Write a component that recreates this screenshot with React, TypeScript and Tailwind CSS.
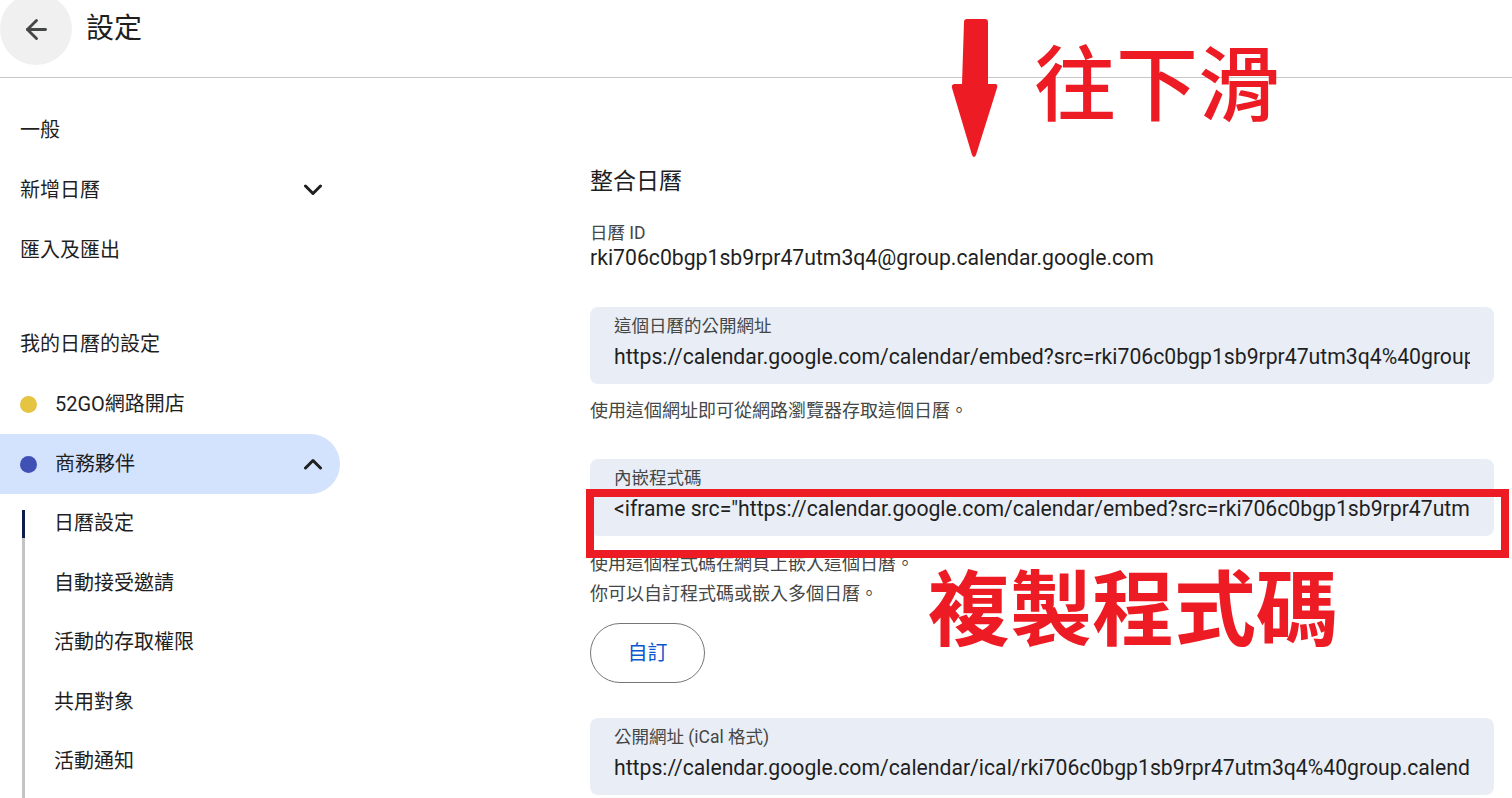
import { ArrowLeft } from "lucide-react";

const font = "font-['Roboto','Noto_Sans_CJK_TC',sans-serif]";

function Chevron({ up }: { up?: boolean }) {
  return (
    <svg width="20" height="12" viewBox="0 0 20 12" className="text-[#1f1f1f]">
      <path
        d={up ? "M2.5 10l7.5-7.5 7.5 7.5" : "M2.5 2l7.5 7.5 7.5-7.5"}
        fill="none"
        stroke="currentColor"
        strokeWidth="3"
        strokeLinecap="round"
        strokeLinejoin="round"
      />
    </svg>
  );
}

function NavItem({ label, children }: { label: string; children?: React.ReactNode }) {
  return (
    <div className="flex h-[60px] items-center justify-between pl-5 pr-[17px] text-[20px] text-[#1f1f1f]">
      <span>{label}</span>
      {children}
    </div>
  );
}

function FieldBox({ label, value }: { label: string; value: string }) {
  return (
    <div className="h-[77px] rounded-lg bg-[#e9eef6] px-6 pt-[7px]">
      <div className="text-[17.5px] leading-[24px] text-[#444746]">{label}</div>
      <div className="mt-[5px] overflow-hidden whitespace-nowrap text-[21.2px] leading-[28px] text-[#1f1f1f]">
        {value}
      </div>
    </div>
  );
}

export default function App() {
  return (
    <div className={`relative h-[798px] w-[1512px] overflow-hidden bg-white ${font}`}>
      <header className="h-[78px] border-b border-[#c7c7c7]">
        <div className="flex h-[58px] items-center">
          <button className="flex h-[72px] w-[72px] shrink-0 items-center justify-center rounded-full bg-[#f0f0f0] text-[#444746]">
            <ArrowLeft size={31} strokeWidth={2.2} />
          </button>
          <h1 className="ml-[14px] text-[28px] text-[#1f1f1f]">設定</h1>
        </div>
      </header>

      <div className="flex">
        <aside className="w-[340px] shrink-0 pt-[22px]">
          <NavItem label="一般" />
          <NavItem label="新增日曆">
            <Chevron />
          </NavItem>
          <NavItem label="匯入及匯出" />
          <div className="mt-[34px]">
            <NavItem label="我的日曆的設定" />
          </div>
          <div className="flex h-[60px] items-center pl-5 text-[20px] text-[#1f1f1f]">
            <span className="h-[17px] w-[17px] rounded-full bg-[#e4c441]" />
            <span className="ml-[18px]">52GO網路開店</span>
          </div>
          <div className="flex h-[60px] items-center justify-between rounded-r-full bg-[#d3e3fd] pl-5 pr-[17px] text-[20px] text-[#1f1f1f]">
            <div className="flex items-center">
              <span className="h-[17px] w-[17px] rounded-full bg-[#3f51b5]" />
              <span className="ml-[18px]">商務夥伴</span>
            </div>
            <Chevron up />
          </div>
          <div className="ml-[22px] mt-[16px] border-l-[3px] border-[#c4c4c4] pb-[20px]">
            <div className="-ml-[3px] h-[28px] w-[3px] bg-[#0b1c4d]" />
            {["日曆設定", "自動接受邀請", "活動的存取權限", "共用對象", "活動通知"].map((t, i) => (
              <div
                key={t}
                className={`flex h-[59.5px] items-center pl-[29px] text-[20px] text-[#1f1f1f] ${i === 0 ? "-mt-[44.5px]" : ""}`}
              >
                {t}
              </div>
            ))}
          </div>
        </aside>

        <main className="min-w-0 flex-1 pl-[250px] pr-[18px] pt-[88px]">
          <h2 className="text-[23px] leading-[32px] text-[#1f1f1f]">整合日曆</h2>
          <div className="mt-[23px] text-[17.5px] leading-[24px] text-[#444746]">日曆 ID</div>
          <div className="text-[21.2px] leading-[26px] text-[#1f1f1f]">
            rki706c0bgp1sb9rpr47utm3q4@group.calendar.google.com
          </div>

          <div className="mt-[36px]">
            <FieldBox
              label="這個日曆的公開網址"
              value="https://calendar.google.com/calendar/embed?src=rki706c0bgp1sb9rpr47utm3q4%40group.calendar.google.com&ctz=Asia%2FTaipei"
            />
          </div>
          <p className="mt-[15px] text-[18px] leading-[24px] text-[#444746]">
            使用這個網址即可從網路瀏覽器存取這個日曆。
          </p>

          <div className="mt-[36px]">
            <FieldBox
              label="內嵌程式碼"
              value={`<iframe src="https://calendar.google.com/calendar/embed?src=rki706c0bgp1sb9rpr47utm3q4%40group.calendar.google.com&ctz=Asia%2FTaipei" style="border: 0" width="800" height="600"></iframe>`}
            />
          </div>
          <div className="mt-[13px] text-[18px] leading-[30px] text-[#444746]">
            <p>使用這個程式碼在網頁上嵌入這個日曆。</p>
            <p>你可以自訂程式碼或嵌入多個日曆。</p>
          </div>
          <button className="mt-[14px] h-[60px] w-[115px] rounded-full border border-[#747775] text-[20px] text-[#0b57d0]">
            自訂
          </button>

          <div className="mt-[35px]">
            <FieldBox
              label="公開網址 (iCal 格式)"
              value="https://calendar.google.com/calendar/ical/rki706c0bgp1sb9rpr47utm3q4%40group.calendar.google.com/public/basic.ics"
            />
          </div>
        </main>
      </div>

      {/* annotations */}
      <svg className="absolute left-[950px] top-[18px]" width="50" height="142" viewBox="0 0 50 142">
        <path
          d="M14 4 Q14 1 17 1 L35 1 Q38 1 38 4 L38 66 L46 66 Q48 67 47 70 L26 137 Q24 141 22 137 L2 70 Q1 67 4 66 L12 66 Z"
          fill="#ed1c24"
        />
      </svg>
      <div className="absolute left-[1034px] top-[29px] text-[82px] font-medium leading-[100px] text-[#ed1c24] font-['Noto_Sans_CJK_TC',sans-serif]">
        往下滑
      </div>
      <div className="absolute left-[586px] top-[489px] h-[69px] w-[923px] border-[8px] border-[#ed1c24]" />
      <div className="absolute left-[928px] top-[554px] text-[82px] font-bold leading-[100px] text-[#ed1c24] font-['Noto_Sans_CJK_TC',sans-serif]">
        複製程式碼
      </div>
    </div>
  );
}
